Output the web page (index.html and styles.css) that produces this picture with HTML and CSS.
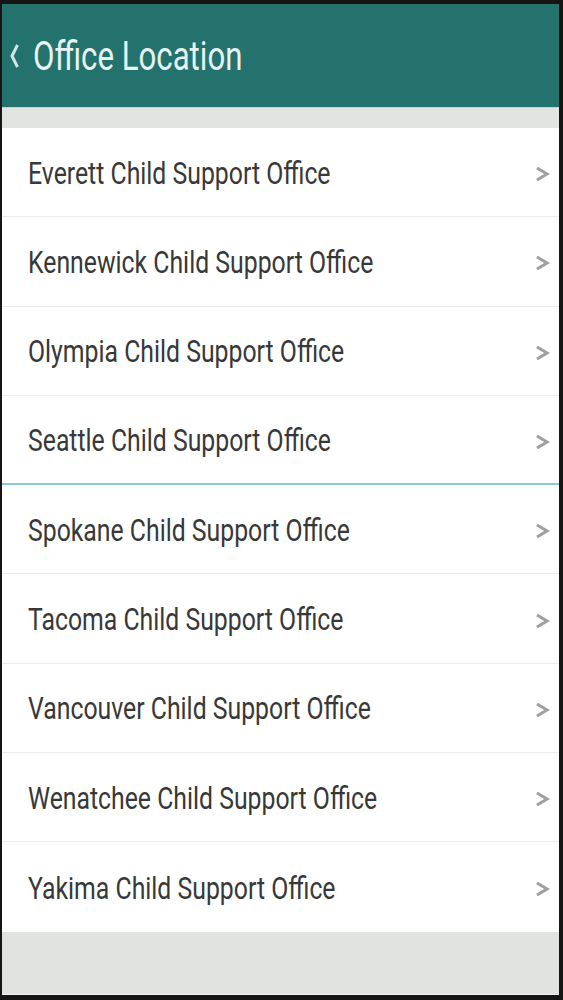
FILE: index.html
```html
<!DOCTYPE html>
<html>
<head>
<meta charset="utf-8">
<link rel="stylesheet" href="styles.css">
</head>
<body>
<div class="frame">
  <header class="appbar">
    <svg class="back" width="12" height="30" viewBox="0 0 12 30"><polyline points="9.5,4 4,15 9.5,26" fill="none" stroke="#cfe6e3" stroke-width="3"/></svg>
    <h1 class="title"><span>Office Location</span></h1>
  </header>
  <div class="band"></div>
  <ul class="list">
    <li class="row"><span class="label">Everett Child Support Office</span><svg class="chev" width="15" height="18" viewBox="0 0 15 18"><polyline points="2,3 12,9 2,15" fill="none" stroke="#a0a0a0" stroke-width="3.2"/></svg></li>
    <li class="row"><span class="label">Kennewick Child Support Office</span><svg class="chev" width="15" height="18" viewBox="0 0 15 18"><polyline points="2,3 12,9 2,15" fill="none" stroke="#a0a0a0" stroke-width="3.2"/></svg></li>
    <li class="row"><span class="label">Olympia Child Support Office</span><svg class="chev" width="15" height="18" viewBox="0 0 15 18"><polyline points="2,3 12,9 2,15" fill="none" stroke="#a0a0a0" stroke-width="3.2"/></svg></li>
    <li class="row selected"><span class="label">Seattle Child Support Office</span><svg class="chev" width="15" height="18" viewBox="0 0 15 18"><polyline points="2,3 12,9 2,15" fill="none" stroke="#a0a0a0" stroke-width="3.2"/></svg></li>
    <li class="row"><span class="label">Spokane Child Support Office</span><svg class="chev" width="15" height="18" viewBox="0 0 15 18"><polyline points="2,3 12,9 2,15" fill="none" stroke="#a0a0a0" stroke-width="3.2"/></svg></li>
    <li class="row"><span class="label">Tacoma Child Support Office</span><svg class="chev" width="15" height="18" viewBox="0 0 15 18"><polyline points="2,3 12,9 2,15" fill="none" stroke="#a0a0a0" stroke-width="3.2"/></svg></li>
    <li class="row"><span class="label">Vancouver Child Support Office</span><svg class="chev" width="15" height="18" viewBox="0 0 15 18"><polyline points="2,3 12,9 2,15" fill="none" stroke="#a0a0a0" stroke-width="3.2"/></svg></li>
    <li class="row"><span class="label">Wenatchee Child Support Office</span><svg class="chev" width="15" height="18" viewBox="0 0 15 18"><polyline points="2,3 12,9 2,15" fill="none" stroke="#a0a0a0" stroke-width="3.2"/></svg></li>
    <li class="row last"><span class="label">Yakima Child Support Office</span><svg class="chev" width="15" height="18" viewBox="0 0 15 18"><polyline points="2,3 12,9 2,15" fill="none" stroke="#a0a0a0" stroke-width="3.2"/></svg></li>
  </ul>
  <div class="footer"></div>
</div>
</body>
</html>
```
FILE: styles.css
```css
html, body {
  margin: 0;
  padding: 0;
  background: #151515;
}
body {
  width: 563px;
  height: 1000px;
  overflow: hidden;
}
.frame {
  box-sizing: border-box;
  height: 1000px;
  padding: 4px 4px 5px 2px;
  display: flex;
  flex-direction: column;
}
.appbar {
  height: 103px;
  background: #24726e;
  display: flex;
  align-items: center;
  padding-left: 6px;
  border-bottom: 1px solid #b9d9d5;
  flex: none;
}
.back {
  flex: none;
  margin-top: 0;
}
.title {
  margin: 0 0 0 13px;
  font-family: Roboto, "Noto Sans", sans-serif;
  font-weight: 400;
  font-size: 40px;
  color: #e6f3f1;
  white-space: nowrap;
  padding-top: 2px;
}
.title span {
  display: inline-block;
  transform: scaleX(0.78);
  transform-origin: left center;
}
.band {
  height: 20px;
  background: #e1e4e0;
  flex: none;
}
.list {
  list-style: none;
  margin: 0;
  padding: 0;
  background: #ffffff;
  flex: none;
}
.row {
  box-sizing: border-box;
  height: 89.3px;
  display: flex;
  align-items: center;
  justify-content: space-between;
  padding: 0 9px 0 26px;
  border-bottom: 1px solid #ececec;
}
.row.selected {
  border-bottom: 2px solid #8cc8dc;
}
.row.last {
  border-bottom: none;
}
.label {
  font-family: Roboto, "Noto Sans", sans-serif;
  font-size: 31px;
  color: #383838;
  white-space: nowrap;
  display: inline-block;
  transform: scaleX(0.80);
  transform-origin: left center;
  margin-top: 2px;
}
.chev {
  flex: none;
  margin-top: 4px;
}
.footer {
  flex: 1;
  background: #e0e3df;
  border-bottom: 1px solid #f2f4f2;
}
```
